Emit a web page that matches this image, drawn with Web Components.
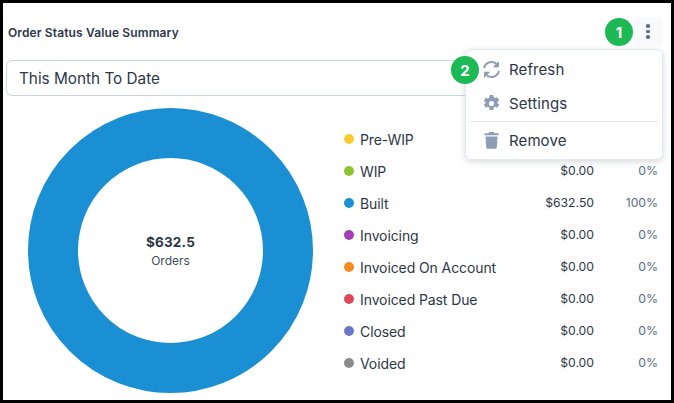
<!DOCTYPE html>
<html>
<head>
<meta charset="utf-8">
<style>
  html, body { margin: 0; padding: 0; background: #000; }
  body { font-family: Inter, "Liberation Sans", sans-serif; color: #2d3748; }
</style>
</head>
<body>
<summary-card>
  <legend-row color="#fdcb2e" label="Pre-WIP"></legend-row>
  <legend-row color="#8fc233" label="WIP" value="$0.00" pct="0%"></legend-row>
  <legend-row color="#1a8fd3" label="Built" value="$632.50" pct="100%"></legend-row>
  <legend-row color="#a23fb5" label="Invoicing" value="$0.00" pct="0%"></legend-row>
  <legend-row color="#f58a1f" label="Invoiced On Account" value="$0.00" pct="0%"></legend-row>
  <legend-row color="#d94a5a" label="Invoiced Past Due" value="$0.00" pct="0%"></legend-row>
  <legend-row color="#6b78c8" label="Closed" value="$0.00" pct="0%"></legend-row>
  <legend-row color="#8c8c8c" label="Voided" value="$0.00" pct="0%"></legend-row>
</summary-card>
<script>
class LegendRow extends HTMLElement {
  constructor() {
    super();
    this.attachShadow({ mode: 'open' });
  }

  connectedCallback() {
    // the first row sits under the open menu, so it has no value or percent
    const value = this.getAttribute('value') || '';
    const pct = this.getAttribute('pct') || '';
    this.shadowRoot.innerHTML = `
      <style>
        :host { display: grid; grid-template-columns: 11px 1fr 70px 64px; align-items: center; height: 32px; font-size: 13px; }
        .dot { width: 10px; height: 10px; border-radius: 50%; background: ${this.getAttribute('color')}; }
        .label { font-size: 14px; padding-left: 5px; white-space: nowrap; letter-spacing: -0.1px; }
        .value { font-size: 12.2px; padding-bottom: 2px; text-align: right; white-space: nowrap; }
        .pct { font-size: 12.2px; padding-bottom: 2px; text-align: right; color: #5a6b85; white-space: nowrap; }
      </style>
      <span class="dot"></span>
      <span class="label">${this.getAttribute('label')}</span>
      <span class="value">${value}</span>
      <span class="pct">${pct}</span>
    `;
  }
}

class DonutChart extends HTMLElement {
  constructor() {
    super();
    this.attachShadow({ mode: 'open' });
    this.shadowRoot.innerHTML = `
      <style>
        :host { display: block; position: relative; width: 285px; height: 285px; }
        svg { display: block; }
        .center { position: absolute; inset: 0; display: flex; flex-direction: column; align-items: center; justify-content: center; padding-top: 1px; box-sizing: border-box; }
        .amount { font-size: 13.5px; font-weight: 700; line-height: 18px; letter-spacing: 0.2px; }
        .caption { font-size: 12px; line-height: 16px; margin-top: 2px; color: #3d4a60; }
      </style>
      <svg width="285" height="285" viewBox="0 0 285 285">
        <circle cx="142.5" cy="142.5" r="117.5" fill="none" stroke="#1a8fd3" stroke-width="50"/>
      </svg>
      <div class="center">
        <span class="amount">$632.5</span>
        <span class="caption">Orders</span>
      </div>
    `;
  }
}

class ActionMenu extends HTMLElement {
  constructor() {
    super();
    this.attachShadow({ mode: 'open' });
    this.shadowRoot.innerHTML = `
      <style>
        :host { display: block; position: absolute; left: 462px; top: 46px; width: 198px; height: 111px; box-sizing: border-box; background: #fff; border: 1px solid #e2e8f0; border-radius: 6px; box-shadow: 0 2px 6px rgba(45,55,72,0.18); padding-top: 2px; }
        .item { display: flex; align-items: center; height: 34px; padding-left: 17px; font-size: 15px; letter-spacing: 0.1px; }
        .item svg { width: 17px; height: 17px; margin-right: 9px; flex: none; }
        hr { border: 0; border-top: 1px solid #e2e8f0; margin: 1px 4px 1px; }
      </style>
      <div class="item">
        <svg viewBox="1 1 16 16" fill="none" stroke="#8d9db5" stroke-width="1.9">
          <path d="M2 7.6A7.2 7.2 0 0 1 14.2 4.2"/>
          <path d="M16 10.4A7.2 7.2 0 0 1 3.8 13.8"/>
          <path d="M16 1v5.800h-5.800z" fill="#8d9db5" stroke="none"/>
          <path d="M2 17v-5.800h5.800z" fill="#8d9db5" stroke="none"/>
        </svg>
        Refresh
      </div>
      <div class="item">
        <svg viewBox="1 1 16 16" fill="#8d9db5" stroke="none">
          <path fill-rule="evenodd" d="M7.3 1h3.4l.4 2.2 1.3.7 2.1-.8 1.700 2.900-1.700 1.500v1l1.700 1.500-1.700 2.900-2.100-.8-1.300.7-.4 2.200H7.300l-.4-2.200-1.300-.7-2.100.8-1.700-2.900 1.700-1.500V8L1.800 6.500l1.700-2.900 2.100.8 1.300-.7zM9 6.600a2.400 2.400 0 1 0 0 4.800 2.400 2.400 0 0 0 0-4.800z"/>
        </svg>
        Settings
      </div>
      <hr>
      <div class="item">
        <svg viewBox="0.5 1 17 17" fill="#8d9db5" stroke="none">
          <path d="M6.800 1h4.400l.6 1.300H16v1.900H2V2.300h4.200z"/>
          <path d="M3 5.400h12l-.7 10.900a1.500 1.500 0 0 1-1.500 1.400H5.200a1.500 1.500 0 0 1-1.500-1.400z"/>
        </svg>
        Remove
      </div>
    `;
  }
}

class StepBadge extends HTMLElement {
  constructor() {
    super();
    this.attachShadow({ mode: 'open' });
    this.shadowRoot.innerHTML = `
      <style>
        :host { display: flex; position: absolute; align-items: center; justify-content: center; width: 28px; height: 28px; border-radius: 50%; background: #1db954; color: #fff; font-size: 15px; font-weight: 700; }
      </style>
      <slot></slot>
    `;
  }
}

class SummaryCard extends HTMLElement {
  constructor() {
    super();
    this.attachShadow({ mode: 'open' });
    this.shadowRoot.innerHTML = `
      <style>
        :host { display: block; position: relative; box-sizing: border-box; width: 668px; height: 397px; margin: 3px 0 0 3px; background: #fff; overflow: hidden; }
        header { display: flex; align-items: center; justify-content: space-between; height: 29px; margin: 14px 8px 0 5px; }
        h2 { margin: 0; padding-top: 2px; font-size: 12px; font-weight: 600; color: #2d3748; letter-spacing: 0.13px; }
        .kebab { display: flex; flex-direction: column; align-items: center; justify-content: center; gap: 2px; width: 30px; height: 29px; background: #f7f9fc; border-radius: 5px; }
        .kebab i { width: 3.5px; height: 3.5px; border-radius: 50%; background: #5a6b85; }
        .select { box-sizing: border-box; height: 36px; margin: 14px 8px 0 3px; padding-left: 12px; display: flex; align-items: center; border: 1px solid #cbd5e0; border-radius: 6px; font-size: 15.3px; color: #2d3748; }
        .body { display: flex; margin-top: 12px; padding-left: 25px; }
        .legend { width: 314px; margin: 15px 0 0 31px; }
      </style>
      <header>
        <h2>Order Status Value Summary</h2>
        <div class="kebab"><i></i><i></i><i></i></div>
      </header>
      <div class="select">This Month To Date</div>
      <div class="body">
        <donut-chart></donut-chart>
        <div class="legend"><slot></slot></div>
      </div>
      <action-menu></action-menu>
      <step-badge style="left:602px;top:15px">1</step-badge>
      <step-badge style="left:448px;top:53px">2</step-badge>
    `;
  }
}

customElements.define('legend-row', LegendRow);
customElements.define('donut-chart', DonutChart);
customElements.define('action-menu', ActionMenu);
customElements.define('step-badge', StepBadge);
customElements.define('summary-card', SummaryCard);
</script>
</body>
</html>
